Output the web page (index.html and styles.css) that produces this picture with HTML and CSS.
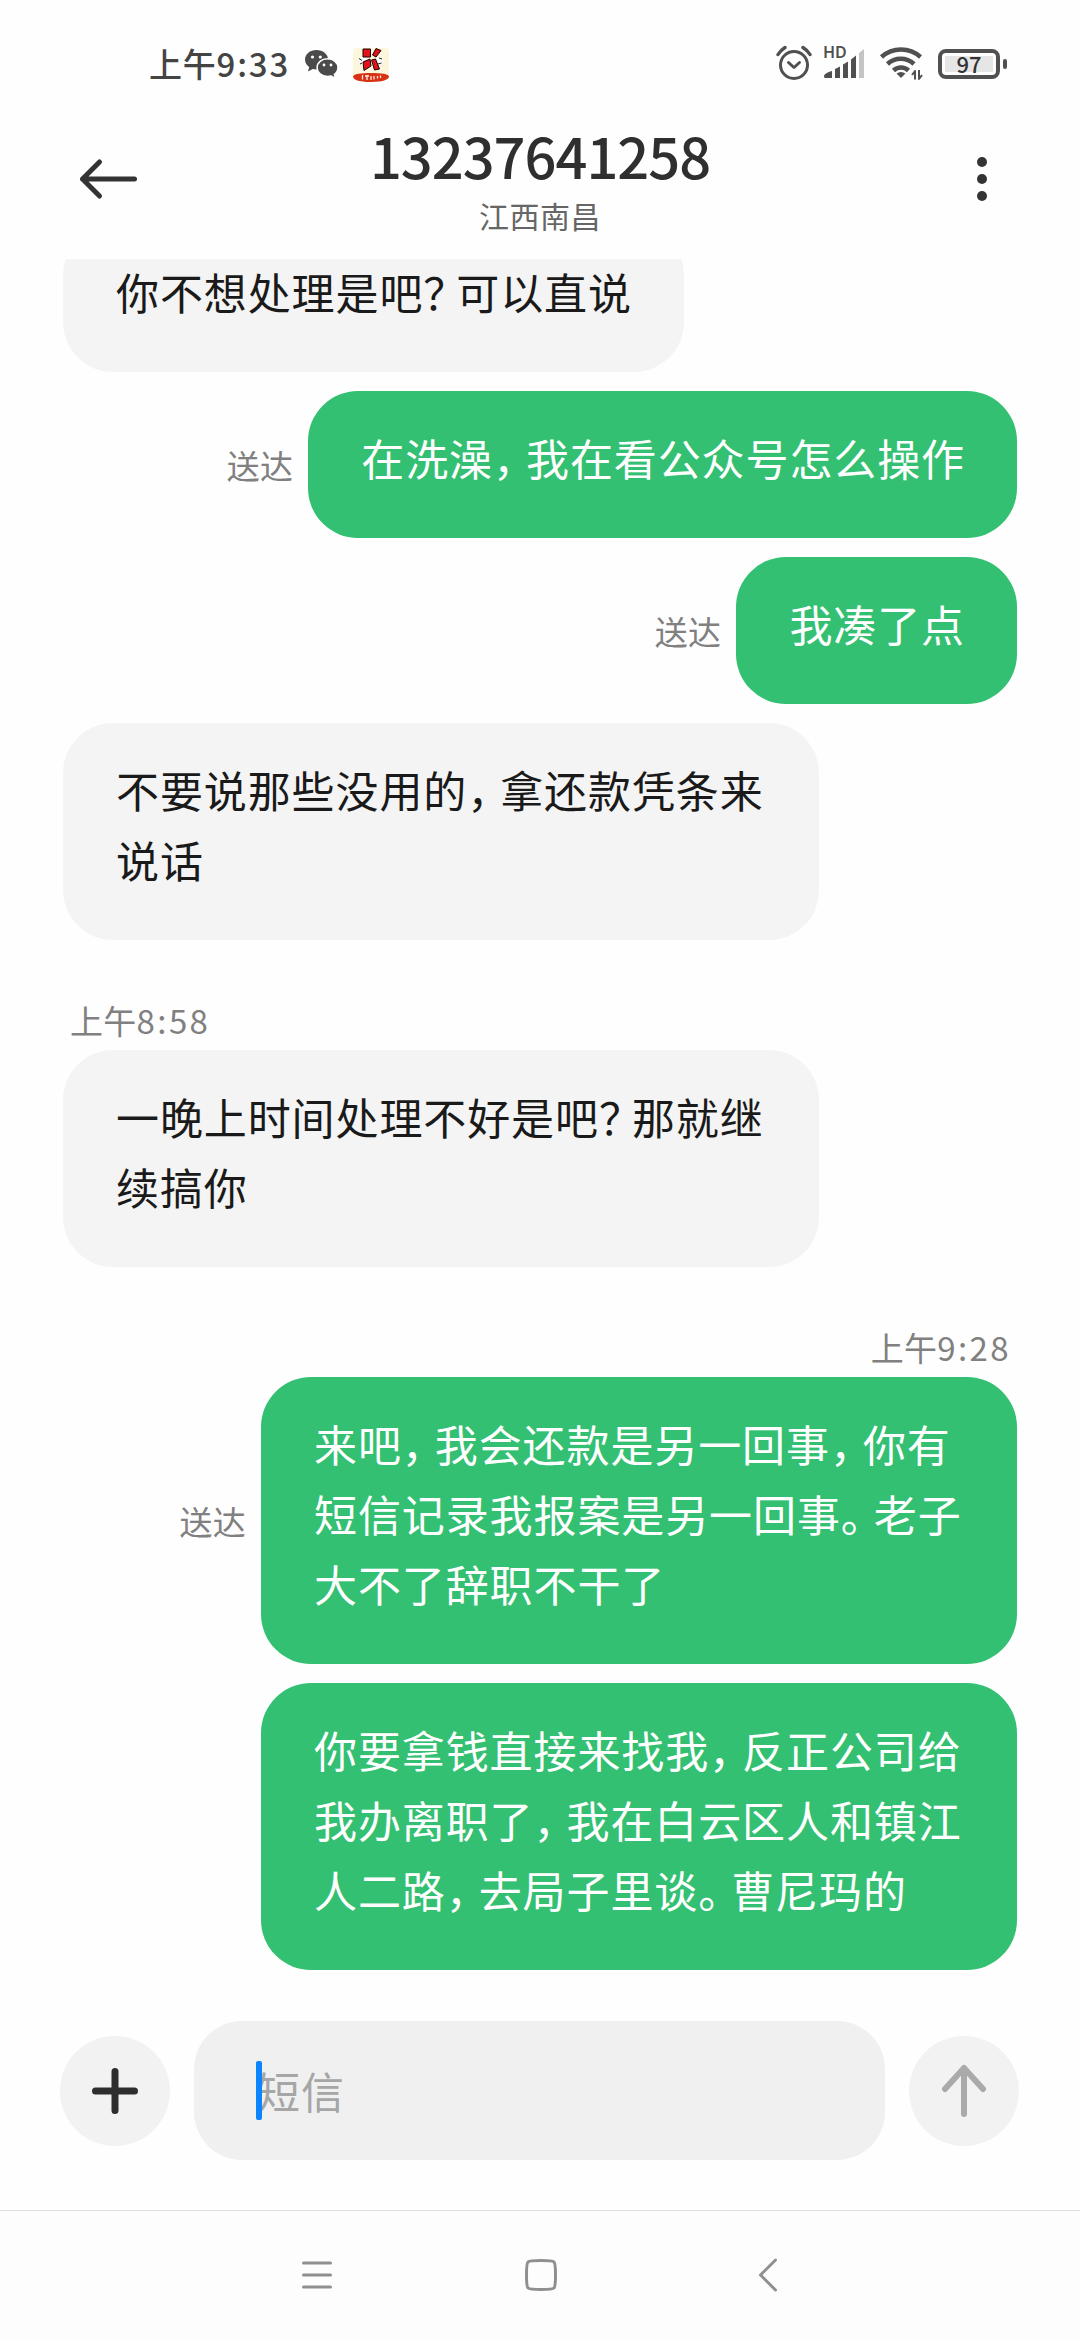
FILE: index.html
```
<!DOCTYPE html>
<html lang="zh-CN">
<head>
    <meta charset="UTF-8">
    <meta name="viewport" content="width=device-width, initial-scale=1.0">
    <title>13237641258</title>
    <link rel="stylesheet" href="styles.css">
</head>
<body>
    <div class="status-bar">
        <span class="status-time">上午<span class="digits">9:33</span></span>
        <svg class="wechat-icon" width="34" height="29" viewBox="0 0 34 29">
            <path d="M11.5 0C5 0 0 4.2 0 9.6c0 3 1.6 5.7 4.2 7.5L3 21.5l4.8-2.5c1.2.3 2.5.5 3.7.5 6.4 0 11.6-4.4 11.6-9.9S17.9 0 11.5 0z"/>
            <path class="wechat-front" d="M22.5 8.8c-5.900 0-10.400 3.900-10.400 8.800s4.500 8.800 10.400 8.800c1.200 0 2.400-.2 3.400-.5l4.600 2.400-1.100-3.900c2.200-1.600 3.600-4.100 3.600-6.800 0-4.900-4.600-8.800-10.500-8.800z"/>
            <g class="wechat-eyes">
                <circle cx="7.5" cy="7" r="1.6"/>
                <circle cx="15.3" cy="7" r="1.6"/>
                <circle cx="19" cy="15" r="1.4"/>
                <circle cx="26" cy="15" r="1.4"/>
            </g>
        </svg>
        <svg class="app-icon" width="36" height="34" viewBox="0 0 36 34">
            <rect width="36" height="32" rx="4" fill="#fbf6dc"/>
            <ellipse cx="10" cy="13" rx="4" ry="3.500" fill="#fff"/>
            <ellipse cx="26" cy="13" rx="4" ry="3.500" fill="#fff"/>
            <path d="M10 1h7.500v8H10zM10 14l7-3 1 7-7 4.500zM19.500 7L23 .5l5 2L23 9zM18.500 12l4-1 4 10-5 1z" fill="#e3121b" stroke="#160505"/>
            <path d="M6 10.500l3 2M7 16l2-1M26 10l3 1M25 16l3.500-1" stroke="#222"/>
            <path d="M0 28.500C0 26 8 25 18 25s18 1 18 3.500-5 5.500-18 5.500S0 31.500 0 28.500z" fill="#d93115"/>
            <path d="M9.500 27v4.500M12 28h4M14 27v5M18 28v4M21 28v3.500M24.500 28v2.500M27.500 27.500v2.500" stroke="#ffe9dc" stroke-width="1.300"/>
        </svg>
        <div class="status-right">
            <svg class="alarm-icon" width="36" height="36" viewBox="0 0 36 36">
                <circle cx="18" cy="20" r="13.500"/>
                <path d="M12.500 17.500l5.500 5 5.500-5"/>
                <path d="M2 9.500C3.800 6.500 6 4.400 9 2.500M34 9.500c-1.800-3-4-5.100-7-7" stroke-width="3.400"/>
            </svg>
            <div class="signal">
                <span class="signal-hd">HD</span>
                <svg width="42" height="34" viewBox="0 0 42 34">
                    <path d="M1 31c0-2 5-4.500 8-5v7H2q-1 0-1-2zM12 24l5-2.500V33h-5zM20 19.500l5-3V33h-5zM28 14.500l5-4V33h-5z"/>
                    <path class="signal-off" d="M36 8l5-4v29h-5z"/>
                </svg>
            </div>
            <svg class="wifi-icon" width="44" height="36" viewBox="0 0 44 36">
                <path d="M2.500 12c11-10 28-10 39 0"/>
                <path d="M8.500 19c7.500-7 19-7 26.500 0"/>
                <path d="M14.500 25.500c4.300-4 10.700-4 15 0"/>
                <path class="wifi-dot" d="M17.500 28.500q4.500-3 9 0L22 33z"/>
                <path class="wifi-arrows" d="M36 34.500V26l-3 4M40 25v9l3-4"/>
            </svg>
            <div class="battery">
                <span class="battery-level">97</span>
            </div>
        </div>
    </div>

    <header class="chat-header">
        <svg class="back-icon" width="60" height="42" viewBox="0 0 60 42">
            <path d="M21.500 4L4.500 21l17 17M4.500 21h52"/>
        </svg>
        <div class="chat-title">
            <h1>13237641258</h1>
            <p>江西南昌</p>
        </div>
        <svg class="more-icon" width="12" height="48" viewBox="0 0 12 48">
            <circle cx="6" cy="7" r="5"/>
            <circle cx="6" cy="24" r="5"/>
            <circle cx="6" cy="41" r="5"/>
        </svg>
    </header>

    <main class="messages">
        <div class="row received">
            <div class="bubble">你不想处理是吧<span class="stop">？</span>可以直说</div>
        </div>
        <div class="row sent">
            <span class="delivered">送达</span>
            <div class="bubble">在洗澡<span class="stop">，</span>我在看公众号怎么操作</div>
        </div>
        <div class="row sent">
            <span class="delivered">送达</span>
            <div class="bubble">我凑了点</div>
        </div>
        <div class="row received">
            <div class="bubble long">不要说那些没用的<span class="stop">，</span>拿还款凭条来<br>说话</div>
        </div>

        <div class="time time-left">上午<span class="digits">8:58</span></div>
        <div class="row received">
            <div class="bubble long">一晚上时间处理不好是吧<span class="stop">？</span>那就继<br>续搞你</div>
        </div>

        <div class="time time-right">上午<span class="digits">9:28</span></div>
        <div class="row sent">
            <span class="delivered">送达</span>
            <div class="bubble long">来吧<span class="stop">，</span>我会还款是另一回事<span class="stop">，</span>你有<br>短信记录我报案是另一回事<span class="stop">。</span>老子<br>大不了辞职不干了</div>
        </div>
        <div class="row sent">
            <div class="bubble long">你要拿钱直接来找我<span class="stop">，</span>反正公司给<br>我办离职了<span class="stop">，</span>我在白云区人和镇江<br>人二路<span class="stop">，</span>去局子里谈<span class="stop">。</span>曹尼玛的</div>
        </div>
    </main>

    <div class="composer">
        <div class="round-btn">
            <svg class="plus-icon" width="46" height="46" viewBox="0 0 46 46">
                <path d="M23 3.500v39M3.500 23h39"/>
            </svg>
        </div>
        <div class="input-box">
            <span class="caret"></span>
            <span class="placeholder">短信</span>
        </div>
        <div class="round-btn">
            <svg class="send-icon" width="46" height="54" viewBox="0 0 46 54">
                <path d="M23 50V4M4 25L23 4l19 21"/>
            </svg>
        </div>
    </div>

    <nav class="nav-bar">
        <svg width="32" height="34" viewBox="0 0 32 34">
            <path d="M2.500 5h27M2.500 17h27M2.500 29h27"/>
        </svg>
        <svg width="34" height="34" viewBox="0 0 34 34">
            <path d="M17 2.500c10 0 12 .5 13 1.500s1.500 4 1.500 13-.5 12-1.500 13-3 1.500-13 1.500S5 31 4 30s-1.500-4-1.500-13S3 5 4 4s3-1.500 13-1.500z"/>
        </svg>
        <svg width="30" height="34" viewBox="-10 0 30 34">
            <path d="M17.500 2L2.500 17l15 15"/>
        </svg>
    </nav>
</body>
</html>
```
FILE: styles.css
```
* {
    margin: 0;
    padding: 0;
    box-sizing: border-box;
}

body {
    width: 1080px;
    height: 2340px;
    display: flex;
    flex-direction: column;
    overflow: hidden;
    background: #fefefe;
    color: #1a1a1a;
    font-family: 'Noto Sans CJK SC', sans-serif;
}

svg {
    display: block;
    flex: none;
    fill: none;
    stroke-linecap: round;
    stroke-linejoin: round;
}

/* Status bar */
.status-bar {
    height: 100px;
    padding: 28px 74px 0 149px;
    display: flex;
    align-items: flex-start;
    color: #444;
}

.status-time {
    width: 156px;
    font-size: 33px;
    font-weight: 500;
    line-height: 70px;
    letter-spacing: 0.8px;
    white-space: nowrap;
}

.digits {
    letter-spacing: 2.4px;
}

.status-time .digits {
    letter-spacing: 1.8px;
}

.wechat-icon {
    margin-top: 22px;
    fill: #4a4a4a;
}

.wechat-front {
    stroke: #fefefe;
    stroke-width: 1.5;
}

.wechat-eyes {
    fill: #fefefe;
}

.app-icon {
    margin: 20px 0 0 14px;
    stroke-linecap: butt;
    stroke-linejoin: miter;
}

.status-right {
    margin-left: auto;
    display: flex;
    align-items: flex-start;
}

.alarm-icon {
    margin-top: 17px;
    stroke: #505050;
    stroke-width: 3;
}

.signal {
    display: grid;
    margin: 17px 0 0 11px;
}

.signal > * {
    grid-area: 1 / 1;
}

.signal svg {
    fill: #505050;
}

.signal .signal-off {
    fill: #c4c4c4;
}

.signal-hd {
    font-family: 'Noto Sans', sans-serif;
    font-size: 16px;
    font-weight: 600;
    line-height: 15px;
    color: #505050;
}

.wifi-icon {
    margin: 17px 0 0 14px;
    stroke: #505050;
    stroke-width: 4.5;
    stroke-linecap: butt;
}

.wifi-dot {
    fill: #505050;
    stroke: none;
}

.wifi-arrows {
    stroke-width: 2;
}

.battery {
    position: relative;
    width: 62px;
    height: 30px;
    margin: 21px 6px 0 15px;
    padding: 3px;
    border: 4px solid #505050;
    border-radius: 8px;
}

.battery::after {
    content: "";
    position: absolute;
    right: -11px;
    top: 6px;
    width: 4px;
    height: 10px;
    border-radius: 2px;
    background: #505050;
}

.battery-level {
    display: block;
    height: 16px;
    background: #e6e6e6;
    color: #333;
    font-size: 22px;
    font-weight: 500;
    line-height: 15px;
    text-align: center;
}

/* Header */
.chat-header {
    height: 159px;
    padding: 0 92px 0 78px;
    display: grid;
    grid-template-columns: 122px 1fr 108px;
    align-items: start;
}

.back-icon {
    margin-top: 58px;
    stroke: #333;
    stroke-width: 5;
}

.chat-title {
    padding-top: 15px;
    text-align: center;
}

.chat-title h1 {
    font-size: 56px;
    font-weight: 500;
    line-height: 80px;
    letter-spacing: -1px;
    color: #2f2f2f;
}

.chat-title p {
    font-size: 30px;
    line-height: 40px;
    letter-spacing: 0.5px;
    color: #666;
}

.more-icon {
    margin-top: 55px;
    justify-self: end;
    fill: #333;
}

/* Messages */
.messages {
    flex: 1;
    padding: 0 63px;
    overflow: hidden;
    display: flex;
    flex-direction: column;
}

.row {
    display: flex;
    align-items: center;
    margin-bottom: 19px;
}

.row:first-child {
    margin-top: -34px;
}

.sent {
    justify-content: flex-end;
    gap: 15px;
}

.bubble {
    padding: 31px 52px 46px 53px;
    border-radius: 50px;
    background: #f4f4f4;
    font-size: 43px;
    line-height: 70px;
    letter-spacing: 0.9px;
    white-space: nowrap;
}

.sent .bubble {
    background: #33c072;
    color: #fff;
}

.bubble.long {
    width: 756px;
}

/* Full-width marks take three quarters of a character */
.stop {
    letter-spacing: -10px;
}

.delivered,
.time {
    font-size: 33px;
    letter-spacing: 0.3px;
    color: #808080;
}

.time {
    height: 91px;
    padding: 43px 6px 0 7px;
    line-height: 36px;
}

.time-right {
    text-align: right;
}

/* Composer */
.composer {
    height: 210px;
    padding: 21px 61px 0 60px;
    display: flex;
    gap: 24px;
}

.round-btn {
    width: 110px;
    height: 110px;
    margin-top: 15px;
    flex: none;
    display: flex;
    align-items: center;
    justify-content: center;
    border-radius: 50%;
    background: #f2f2f2;
}

.plus-icon {
    stroke: #2e2e2e;
    stroke-width: 7;
}

.send-icon {
    stroke: #aaa;
    stroke-width: 6;
}

.input-box {
    position: relative;
    flex: 1;
    height: 139px;
    padding-left: 63px;
    border-radius: 48px;
    background: #f0f0f0;
}

.placeholder {
    font-size: 43px;
    line-height: 138px;
    letter-spacing: 0.9px;
    color: #a6a6a6;
}

.caret {
    position: absolute;
    left: 62px;
    top: 40px;
    width: 6px;
    height: 59px;
    border-radius: 2px;
    background: #0a84ff;
}

/* System navigation */
.nav-bar {
    height: 130px;
    padding: 47px 302px 0 301px;
    display: flex;
    justify-content: space-between;
    border-top: 1px solid #e0e0e0;
    background: #fdfdfd;
    stroke: #8f8f8f;
    stroke-width: 3;
}
```
